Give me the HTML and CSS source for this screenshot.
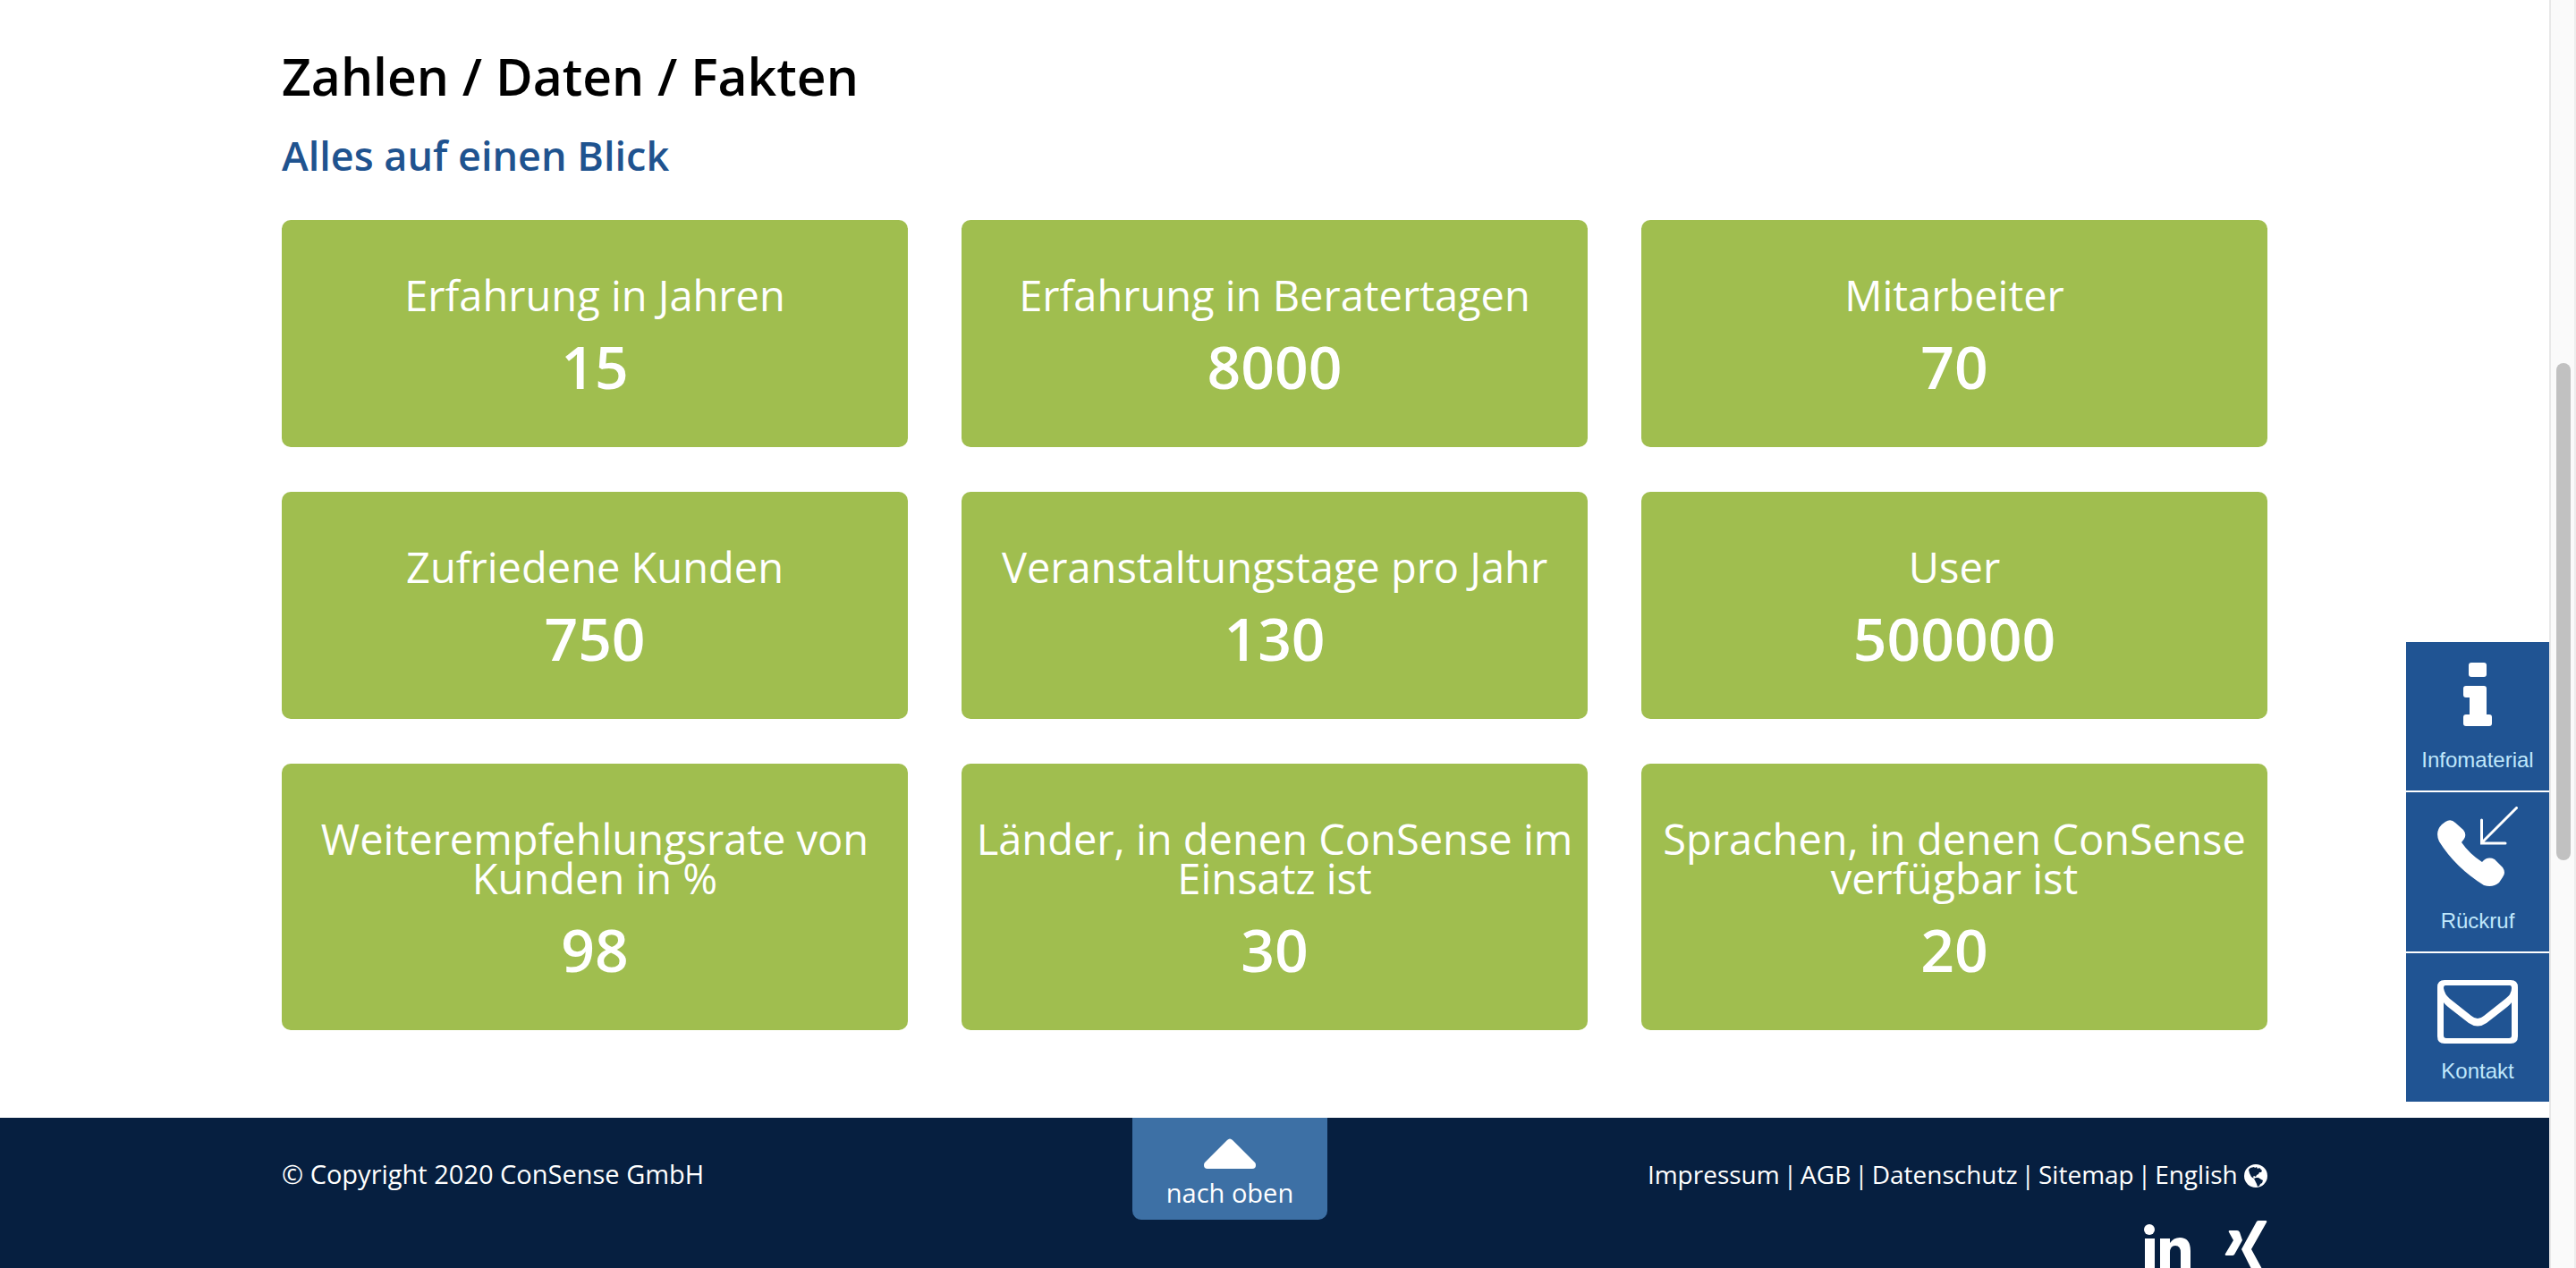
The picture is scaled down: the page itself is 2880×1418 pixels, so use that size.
FILE: index.html
```html
<!DOCTYPE html>
<html lang="de">
<head>
<meta charset="utf-8">
<title>Zahlen / Daten / Fakten – ConSense GmbH</title>
<link rel="stylesheet" href="styles.css">
</head>
<body>
<div class="page">
  <main class="content">
    <h1>Zahlen / Daten / Fakten</h1>
    <h2>Alles auf einen Blick</h2>
    <div class="facts">
      <section class="fact"><h3>Erfahrung in Jahren</h3><p>15</p></section>
      <section class="fact"><h3>Erfahrung in Beratertagen</h3><p>8000</p></section>
      <section class="fact"><h3>Mitarbeiter</h3><p>70</p></section>
      <section class="fact"><h3>Zufriedene Kunden</h3><p>750</p></section>
      <section class="fact"><h3>Veranstaltungstage pro Jahr</h3><p>130</p></section>
      <section class="fact"><h3>User</h3><p>500000</p></section>
      <section class="fact"><h3>Weiterempfehlungsrate von Kunden in %</h3><p>98</p></section>
      <section class="fact"><h3>Länder, in denen ConSense im Einsatz ist</h3><p>30</p></section>
      <section class="fact"><h3>Sprachen, in denen ConSense verfügbar ist</h3><p>20</p></section>
    </div>
  </main>
  <footer class="footer">
    <div class="footer-row">
      <p class="copyright">© Copyright 2020 ConSense GmbH</p>
      <button class="to-top" type="button">
        <svg width="58" height="34" viewBox="0 0 58 34" aria-hidden="true"><path d="M4 34q-4 0-4-4 0-2 1-3L26 2q3-3 6 0l25 25q1 1 1 3 0 4-4 4z"/></svg>
        nach oben
      </button>
      <div class="footer-nav">
        <nav class="links">
          <a href="#impressum">Impressum</a><span>|</span><a href="#agb">AGB</a><span>|</span><a href="#datenschutz">Datenschutz</a><span>|</span><a href="#sitemap">Sitemap</a><span>|</span><a href="#english">English <svg class="globe" viewBox="0 0 26 26" aria-hidden="true"><circle cx="13" cy="13" r="13" fill="#fff"/><path fill="#061f40" d="M5 6l2-2 4-1 1 1 2-1 1 2 2-1 3 3-1 2-2 0-1 2-2 1-1 2-2-1-1 1 1 2 2-1 3 0 3 2 2 1-1 3-2 1-1 2-2 1-1-3-1-2-1-2-1-2-3-2-2-4z"/></svg></a>
        </nav>
        <div class="social">
          <a href="#linkedin" aria-label="LinkedIn"><svg width="52" height="64" viewBox="0 0 52 64"><circle cx="6" cy="10" r="6"/><path d="M1 20h11v34H1zM18 20h11v5q4-6 11-6 12 0 12 15v20H41V36q0-8-6-8-6 0-6 8v18H18z"/></svg></a>
          <a href="#xing" aria-label="XING"><svg width="48" height="64" viewBox="0 0 48 64"><path d="M6 11h8q2 0 3 2l3 9-9 16q-1 1-2 1H2q-2 0-1-2l9-15-5-9q-1-2 1-2zM38 0h8q2 0 1 2L30 32l12 22q1 2-1 2h-8q-2 0-3-2L19 32 36 1q1-1 2-1z"/></svg></a>
        </div>
      </div>
    </div>
  </footer>
</div>
<div class="scroll-track" aria-hidden="true"><div class="scroll-thumb"></div></div>
<aside class="contact-bar">
  <a class="short" href="#infomaterial">
    <svg width="32" height="71" viewBox="0 0 32 71" aria-hidden="true"><rect x="6" width="20" height="16" rx="3"/><path d="M3 26h20q3 0 3 3v29h3q3 0 3 3v7q0 3-3 3H3q-3 0-3-3v-7q0-3 3-3h4V39H3q-3 0-3-3v-7q0-3 3-3z"/></svg>
    Infomaterial
  </a>
  <a class="tall" href="#rueckruf">
    <svg width="90" height="90" viewBox="0 0 90 90" aria-hidden="true"><path d="M5 20L9 17q6-4 11 1l9 8q4 5 1 10l-3 4q9 13 23 22 6-7 14-3l9 9q4 6 0 11l-4 6q-7 6-17 3Q20 68 2 39q-5-11 3-19z"/><path class="stroke" d="M88.500 1.500L50 40M49.500 15v26H76"/></svg>
    Rückruf
  </a>
  <a class="short mail" href="#kontakt">
    <svg width="90" height="71" viewBox="0 0 90 71" aria-hidden="true"><path fill-rule="evenodd" d="M8 0h74q8 0 8 8v55q0 8-8 8H8q-8 0-8-8V8Q0 0 8 0zM7 25v37q0 3 3 3h70q3 0 3-3V25q-2 3-10 9L55 48q-10 7-20 0L17 34Q9 28 7 25zM9 6Q7 6 7 9q1 7 7 12l24 19q7 6 14 0l24-19q7-5 7-12 0-3-2-3z"/></svg>
    Kontakt
  </a>
</aside>
</body>
</html>
```
FILE: styles.css
```css
* { box-sizing: border-box; }
body {
  margin: 0;
  height: 100vh;
  overflow: hidden;
  display: grid;
  grid-template-columns: 1fr 30px;
  background: #fff;
  font-family: "Open Sans", "Noto Sans", sans-serif;
}
h1, h2, h3, p { margin: 0; }
a { color: inherit; text-decoration: none; }
svg { fill: currentColor; }

.content, .footer-row {
  width: 100%;
  max-width: 2220px;
  margin: 0 auto;
}
.content { padding: 50px 0 98px; }
h1 { font-size: 57px; line-height: 70px; font-weight: 600; color: #000; }
h2 { margin: 26px 0 44px; font-size: 45px; line-height: 56px; font-weight: 600; color: #1f538f; }

.facts {
  display: grid;
  grid-template-columns: repeat(3, 1fr);
  gap: 50px 60px;
}
.fact {
  padding: 62px 8px 52px;
  border-radius: 10px;
  background: #a0be4f;
  color: #fff;
  text-align: center;
}
.fact h3 { font-size: 47px; line-height: 44px; font-weight: 400; }
.fact p { margin-top: 18px; font-size: 66px; line-height: 78px; font-weight: 600; }

.footer {
  min-height: 220px;
  background: #061f40;
  color: #fff;
  font-size: 29px;
  line-height: 44px;
}
.footer-row {
  display: grid;
  grid-template-columns: 951fr 218px 1051fr;
  align-items: start;
}
.copyright { padding-top: 41px; }
.to-top {
  height: 114px;
  padding: 14px 0 0;
  border: 0;
  border-radius: 0 0 10px 10px;
  background: #3d70a5;
  color: #fff;
  font: inherit;
  display: flex;
  flex-direction: column;
  align-items: center;
  justify-content: center;
  gap: 5px;
}
.footer-nav { padding-top: 41px; }
.links {
  display: flex;
  justify-content: flex-end;
  gap: 4px;
  font-size: 28px;
  white-space: nowrap;
}
.globe { width: 26px; height: 26px; vertical-align: -4px; }
.social {
  display: flex;
  justify-content: flex-end;
  gap: 38px;
  padding-top: 30px;
}

.scroll-track {
  padding: 406px 4px 0 6px;
  border-left: 2px solid #e8e8e8;
  border-right: 2px solid #ededed;
  background: #fafafa;
}
.scroll-thumb { width: 16px; height: 556px; border-radius: 8px; background: #c1c1c1; }

.contact-bar {
  position: fixed;
  right: 30px;
  bottom: 186px;
  width: 160px;
  display: flex;
  flex-direction: column;
  gap: 2px;
  background: #fff;
  color: #bfe7fb;
  font: 24px/28px "Liberation Sans", Arial, sans-serif;
}
.contact-bar a {
  display: flex;
  flex-direction: column;
  align-items: center;
  justify-content: flex-end;
  gap: 24px;
  padding-bottom: 20px;
  background: #205493;
}
.contact-bar svg { color: #fff; }
.contact-bar .mail { gap: 17px; }
.contact-bar .stroke { fill: none; stroke: #fff; stroke-width: 3; stroke-linecap: round; }
.short { height: 166px; }
.tall { height: 178px; }
```
